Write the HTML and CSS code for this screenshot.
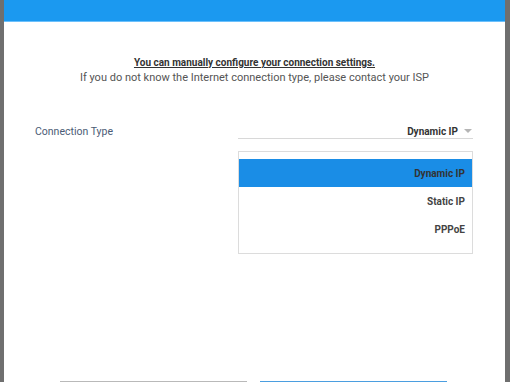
FILE: index.html
```html
<!DOCTYPE html>
<html lang="en">

<head>
    <meta charset="UTF-8">
    <meta name="viewport" content="width=device-width, initial-scale=1.0">
    <title>Connection Settings</title>
    <link rel="stylesheet" href="styles.css">
</head>

<body>
    <div class="dialog">
        <!-- Header bar -->
        <div class="dialog-header"></div>

        <div class="dialog-body">
            <p class="intro-title">You can manually configure your connection settings.</p>
            <p class="intro-text">If you do not know the Internet connection type, please contact your ISP</p>

            <div class="form-row">
                <label class="form-label">Connection Type</label>
                <div class="select-wrap">
                    <div class="select">
                        <span class="select-value">Dynamic IP</span>
                        <span class="select-arrow"></span>
                    </div>
                    <!-- Open dropdown -->
                    <ul class="dropdown">
                        <li class="active">Dynamic IP</li>
                        <li>Static IP</li>
                        <li>PPPoE</li>
                    </ul>
                </div>
            </div>
        </div>

        <!-- Buttons sit just below the visible area -->
        <div class="dialog-actions">
            <div class="btn cancel"></div>
            <div class="btn save"></div>
        </div>
    </div>
</body>

</html>
```

FILE: styles.css
```css
body {
    font-family: Roboto, 'Liberation Sans', sans-serif;
    margin: 0;
    padding: 0;
    background-color: #6f6f6f;
    overflow: hidden;
}

.dialog {
    margin: 0 5px 0 4px;
    height: 382px;
    overflow: hidden;
    background-color: #ffffff;
    display: flex;
    flex-direction: column;
}

.dialog-header {
    height: 21px;
    flex-shrink: 0;
    background-color: #1b99f0;
    border-bottom: 1px solid #6cc0fb;
}

.dialog-body {
    flex: 1;
    padding-top: 34px;
}

.intro-title {
    margin: 0;
    text-align: center;
    font-size: 10px;
    font-weight: bold;
    color: #333;
    text-decoration: underline;
    line-height: 14px;
}

.intro-text {
    margin: 1px 0 0;
    text-align: center;
    font-size: 11px;
    color: #555;
    line-height: 14px;
}

.form-row {
    display: flex;
    margin-top: 38px;
    padding: 0 32px 0 31px;
}

.form-label {
    width: 203px;
    font-size: 10.5px;
    color: #4b5b75;
    line-height: 14px;
    padding-top: 2px;
}

.select-wrap {
    flex: 1;
}

.select {
    display: flex;
    justify-content: flex-end;
    align-items: center;
    gap: 6px;
    height: 15px;
    border-bottom: 1px solid #d8d8d8;
    padding-right: 1px;
}

.select-value {
    font-size: 10px;
    font-weight: bold;
    color: #333;
    padding-top: 1px;
}

.select-arrow {
    width: 0;
    height: 0;
    border-left: 4px solid transparent;
    border-right: 4px solid transparent;
    border-top: 4px solid #b5b5b5;
}

.dropdown {
    list-style: none;
    margin: 12px 0 0;
    padding: 7px 0 10px;
    border: 1px solid #dcdcdc;
}

.dropdown li {
    height: 28px;
    line-height: 29px;
    text-align: right;
    padding-right: 7px;
    font-size: 10px;
    font-weight: bold;
    color: #444;
}

.dropdown li.active {
    background-color: #1a8de6;
    color: #333;
}

.dialog-actions {
    display: flex;
    flex-shrink: 0;
    gap: 13px;
    padding-left: 56px;
    height: 1px;
}

.btn {
    width: 187px;
    height: 1px;
}

.btn.cancel {
    background-color: #b9b9b9;
}

.btn.save {
    background-color: #4b9ee0;
}
```
